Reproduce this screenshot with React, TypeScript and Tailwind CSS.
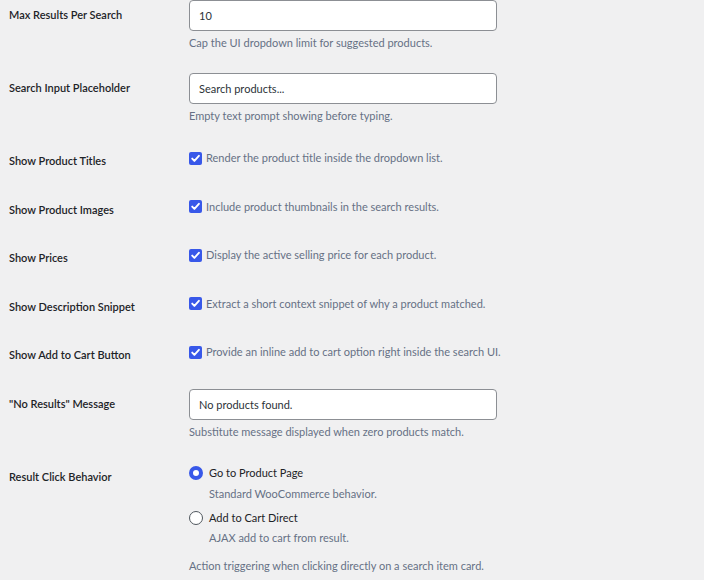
import React from "react";

function Check() {
  return (
    <span className="mr-[4px] flex h-[13px] w-[13px] shrink-0 items-center justify-center rounded-[2px] bg-[#3858e9]">
      <svg width="11" height="11" viewBox="0 0 11 11" fill="none">
        <path d="M2.2 5.6 L4.4 7.9 L8.9 2.8" stroke="#ffffff" strokeWidth="1.9" strokeLinecap="round" strokeLinejoin="round" />
      </svg>
    </span>
  );
}

function InputRow({ label, value, desc }: { label: string; value: string; desc: string }) {
  return (
    <div className="flex h-[73px]">
      <div className="w-[180px] pt-[20px] font-semibold leading-[20px] text-[#1d2327]">{label}</div>
      <div className="pt-[15px]">
        <input
          readOnly
          value={value}
          className="h-[31px] w-[308px] rounded-[4px] border border-[#8c8f94] bg-white px-[9px] text-[11px] text-[#2c3338] outline-none"
        />
        <p className="mt-[2px] leading-[20px] text-[#667085]">{desc}</p>
      </div>
    </div>
  );
}

function CheckRow({ label, text }: { label: string; text: string }) {
  return (
    <div className="flex h-[48.5px]">
      <div className="w-[180px] pt-[20px] font-semibold leading-[20px] text-[#1d2327]">{label}</div>
      <div className="flex items-center self-start pt-[17px] leading-[20px] text-[#667085]">
        <Check />
        <span>{text}</span>
      </div>
    </div>
  );
}

export default function App() {
  return (
    <div className="h-[580px] overflow-hidden bg-[#f0f0f1] font-['Lato',sans-serif] text-[11px] text-[#1d2327]">
      <div className="-mt-[15px] pl-[9px]">
        <InputRow label="Max Results Per Search" value="10" desc="Cap the UI dropdown limit for suggested products." />
        <InputRow label="Search Input Placeholder" value="Search products..." desc="Empty text prompt showing before typing." />
        <CheckRow label="Show Product Titles" text="Render the product title inside the dropdown list." />
        <CheckRow label="Show Product Images" text="Include product thumbnails in the search results." />
        <CheckRow label="Show Prices" text="Display the active selling price for each product." />
        <CheckRow label="Show Description Snippet" text="Extract a short context snippet of why a product matched." />
        <CheckRow label="Show Add to Cart Button" text="Provide an inline add to cart option right inside the search UI." />
        <InputRow label={'"No Results" Message'} value="No products found." desc="Substitute message displayed when zero products match." />
        <div className="flex">
          <div className="w-[180px] pt-[20px] font-semibold leading-[20px] text-[#1d2327]">Result Click Behavior</div>
          <div className="pt-[16px] leading-[20px]">
            <div className="flex h-[20px] items-center">
              <span className="mr-[6px] h-[14px] w-[14px] rounded-full border-[4px] border-[#3858e9] bg-white" />
              <span className="text-[#1d2327]">Go to Product Page</span>
            </div>
            <p className="mt-[1px] pl-[20px] text-[#667085]">Standard WooCommerce behavior.</p>
            <div className="mt-[4px] flex h-[20px] items-center">
              <span className="mr-[6px] h-[14px] w-[14px] rounded-full border-[1.5px] border-[#50575e] bg-white" />
              <span className="text-[#1d2327]">Add to Cart Direct</span>
            </div>
            <p className="pl-[20px] text-[#667085]">AJAX add to cart from result.</p>
            <p className="mt-[8px] text-[#667085]">Action triggering when clicking directly on a search item card.</p>
          </div>
        </div>
      </div>
    </div>
  );
}
